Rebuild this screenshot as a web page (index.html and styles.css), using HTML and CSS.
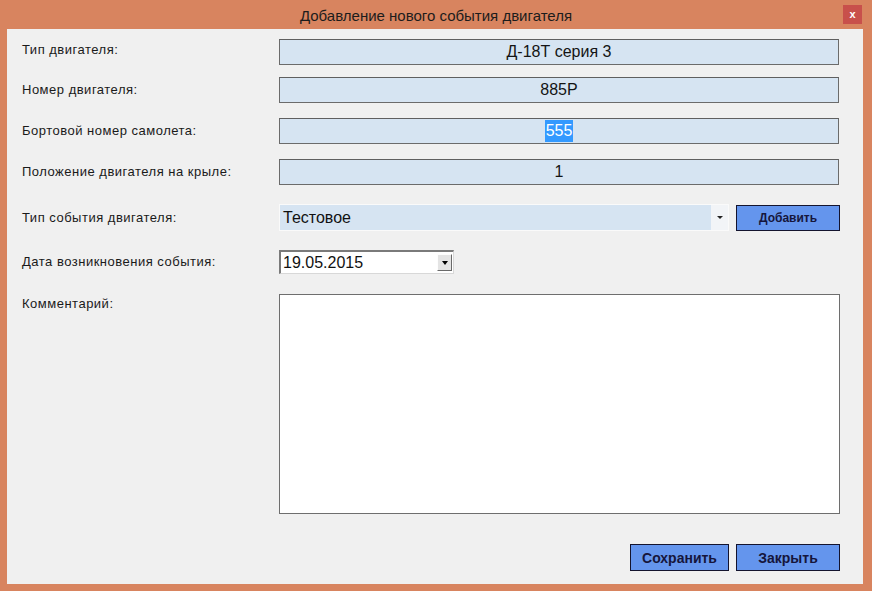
FILE: index.html
```html
<!DOCTYPE html>
<html lang="ru">
<head>
<meta charset="utf-8">
<title>Добавление нового события двигателя</title>
<link rel="stylesheet" href="styles.css">
</head>
<body>
<div class="window">
  <div class="titlebar">
    <span class="title">Добавление нового события двигателя</span>
    <span class="close">x</span>
  </div>
  <div class="client">
    <div class="row row-1">
      <span class="label">Тип двигателя:</span>
      <div class="field">Д-18Т серия 3</div>
    </div>
    <div class="row row-2">
      <span class="label">Номер двигателя:</span>
      <div class="field">885Р</div>
    </div>
    <div class="row row-3">
      <span class="label">Бортовой номер самолета:</span>
      <div class="field"><span class="selected">555</span></div>
    </div>
    <div class="row row-4">
      <span class="label">Положение двигателя на крыле:</span>
      <div class="field">1</div>
    </div>
    <div class="row row-5">
      <span class="label">Тип события двигателя:</span>
      <div class="combo-line">
        <div class="combo">
          <span class="combo-text">Тестовое</span>
          <span class="combo-arrow"><span class="tri-small"></span></span>
        </div>
        <button class="btn btn-add">Добавить</button>
      </div>
    </div>
    <div class="row row-6">
      <span class="label">Дата возникновения события:</span>
      <div class="date">
        <span class="date-text">19.05.2015</span>
        <span class="date-btn"><span class="tri"></span></span>
      </div>
    </div>
    <div class="row row-7">
      <span class="label label-top">Комментарий:</span>
      <div class="memo"></div>
    </div>
    <div class="actions">
      <button class="btn btn-big">Сохранить</button>
      <button class="btn btn-big">Закрыть</button>
    </div>
  </div>
</div>
</body>
</html>
```
FILE: styles.css
```css
html, body {
  margin: 0;
  padding: 0;
}
body {
  width: 872px;
  height: 591px;
  overflow: hidden;
  font-family: "Liberation Sans", Arial, sans-serif;
}
.window {
  width: 872px;
  height: 591px;
  background: #d8845f;
  display: flex;
  flex-direction: column;
  box-sizing: border-box;
}
.titlebar {
  position: relative;
  height: 29px;
  flex: none;
  display: flex;
  align-items: center;
  justify-content: center;
}
.title {
  font-size: 15px;
  color: #1c1c1c;
  padding-top: 1px;
}
.close {
  position: absolute;
  left: 843px;
  top: 5px;
  width: 19px;
  height: 19px;
  background: #c8504b;
  color: #fff;
  font-size: 11px;
  font-weight: bold;
  display: flex;
  align-items: center;
  justify-content: center;
  line-height: 1;
}
.client {
  flex: 1;
  margin: 0 9px 7px 7px;
  background: #f0f0f0;
  padding: 10px 0 0 15px;
  display: flex;
  flex-direction: column;
}
.row {
  display: grid;
  grid-template-columns: 257px 561px;
  align-items: center;
}
.row-2 { margin-top: 12px; }
.row-3 { margin-top: 15px; }
.row-4 { margin-top: 15px; }
.row-5 { margin-top: 19px; }
.row-6 { margin-top: 19px; }
.row-7 { margin-top: 20px; align-items: start; }
.label {
  font-size: 13px;
  letter-spacing: 0.5px;
  color: #1a1a1a;
  line-height: 16px;
}
.row-1 .label { margin-top: -5px; }
.label-top { padding-top: 2px; }
.field {
  height: 26px;
  box-sizing: border-box;
  border: 1px solid #6b6b6b;
  border-top-color: #5f5f5f;
  background: #d6e4f2;
  display: flex;
  align-items: center;
  justify-content: center;
  font-size: 16px;
  color: #141414;
  width: 560px;
}
.selected {
  background: #3399ff;
  color: #fff;
  line-height: 22px;
  padding: 0 1px;
}
.combo-line {
  display: flex;
  gap: 7px;
  align-items: center;
}
.combo {
  width: 450px;
  height: 27px;
  box-sizing: border-box;
  border: 1px solid #fafafa;
  background: #d6e4f2;
  display: flex;
  align-items: center;
}
.combo-text {
  flex: 1;
  font-size: 16px;
  color: #111;
  padding-left: 3px;
}
.combo-arrow {
  width: 17px;
  height: 100%;
  background: #f2f4f7;
  display: flex;
  align-items: center;
  justify-content: center;
}
.tri-small {
  width: 0;
  height: 0;
  border-left: 3px solid transparent;
  border-right: 3px solid transparent;
  border-top: 3px solid #222;
}
.btn {
  font-family: "Liberation Sans", Arial, sans-serif;
  font-weight: bold;
  color: #16163c;
  background: #6495ed;
  border: 1px solid #14142e;
  padding: 0;
  margin: 0;
  box-sizing: border-box;
  cursor: default;
}
.btn-add {
  width: 104px;
  height: 26px;
  font-size: 12px;
}
.date {
  width: 175px;
  height: 24px;
  box-sizing: border-box;
  background: #fff;
  border-top: 2px solid #7a7a7a;
  border-left: 2px solid #7a7a7a;
  border-right: 1px solid #d8d8d8;
  border-bottom: 1px solid #d8d8d8;
  display: flex;
  align-items: center;
  padding-right: 1px;
}
.date-text {
  flex: 1;
  font-size: 16px;
  color: #111;
  padding-left: 2px;
}
.date-btn {
  width: 15px;
  height: 17px;
  box-sizing: border-box;
  background: #e4e4e4;
  border-top: 1px solid #fdfdfd;
  border-left: 1px solid #fdfdfd;
  border-right: 1px solid #6a6a6a;
  border-bottom: 1px solid #6a6a6a;
  display: flex;
  align-items: center;
  justify-content: center;
}
.tri {
  width: 0;
  height: 0;
  border-left: 3.5px solid transparent;
  border-right: 3.5px solid transparent;
  border-top: 4px solid #000;
}
.memo {
  width: 561px;
  height: 220px;
  box-sizing: border-box;
  background: #fff;
  border: 1px solid #6e6e6e;
}
.actions {
  margin-top: 30px;
  display: flex;
  gap: 7px;
  padding-left: 608px;
}
.btn-big {
  width: 99px;
  height: 27px;
  font-size: 14px;
}
.btn-big + .btn-big {
  width: 104px;
}
```
